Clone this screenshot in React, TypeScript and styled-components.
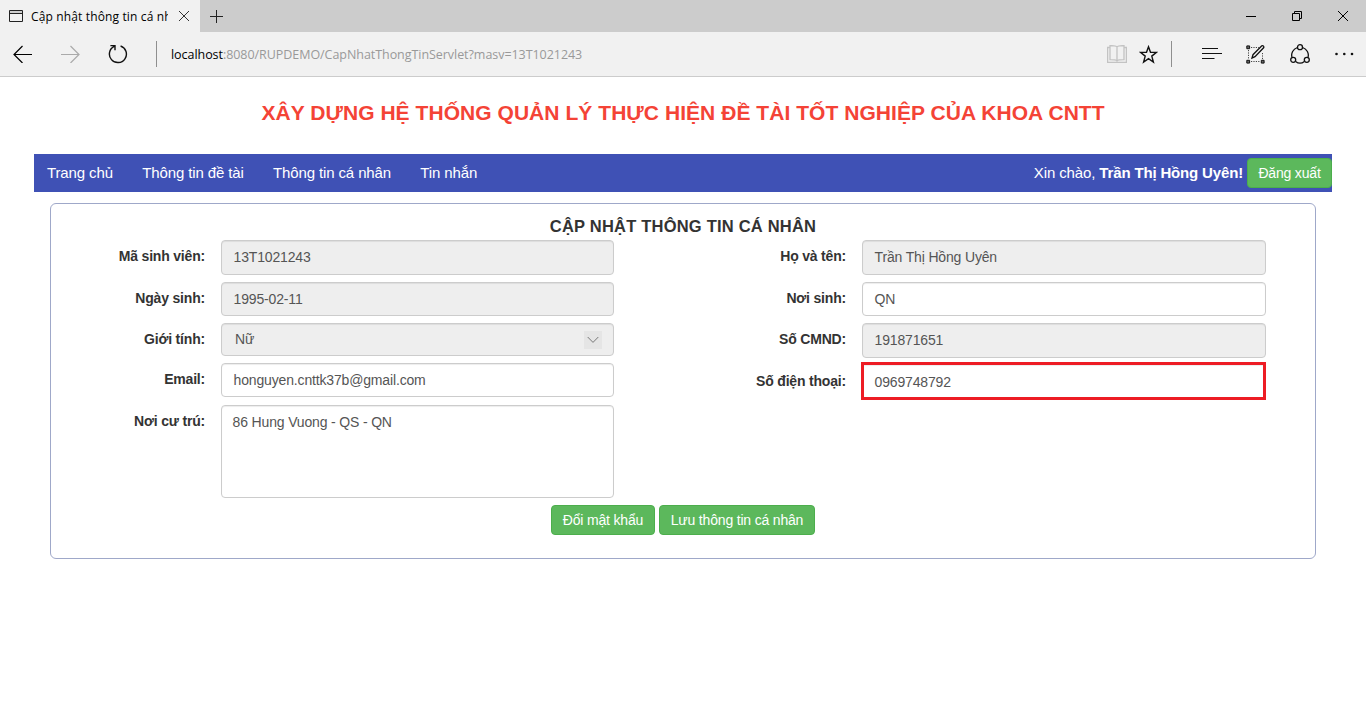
import React from "react";
import styled, { createGlobalStyle } from "styled-components";

const GlobalStyle = createGlobalStyle`
  * { box-sizing: border-box; }
  html, body { margin: 0; padding: 0; background: #fff; }
  body { overflow: hidden; font-family: "Liberation Sans", Arial, sans-serif; font-size: 14px; color: #333; }
  svg { display: block; }
`;

const Page = styled.div`
  width: 1366px;
  height: 728px;
  background: #fff;
`;

const TabStrip = styled.div`
  display: flex;
  height: 32px;
  background: #ccc;
`;

const Tab = styled.div`
  display: flex;
  align-items: center;
  width: 200px;
  height: 32px;
  padding-left: 9px;
  background: #f1f1f1;
`;

const TabTitle = styled.div`
  width: 137px;
  margin-left: 8px;
  padding-top: 1px;
  overflow: hidden;
  white-space: nowrap;
  font: 12px/20px "Open Sans", sans-serif;
  letter-spacing: 0.14px;
  color: #000;
`;

const TabClose = styled.div`
  margin-left: 11px;
`;

const NewTab = styled.div`
  padding: 9px 10px;
`;

const WindowControls = styled.div`
  display: flex;
  margin-left: auto;
`;

const WindowControl = styled.div`
  display: flex;
  align-items: center;
  justify-content: center;
  width: 46px;
  height: 32px;
`;

const Toolbar = styled.div`
  display: flex;
  align-items: center;
  height: 45px;
  padding-right: 12px;
  border-bottom: 1px solid #ccc;
  background: #f1f1f1;
`;

const ToolButton = styled.div<{ $left: number }>`
  margin-left: ${(p) => p.$left}px;
`;

const Separator = styled.div<{ $left: number }>`
  width: 1px;
  height: 26px;
  margin-left: ${(p) => p.$left}px;
  background: #8f8f8f;
`;

const Address = styled.div`
  flex: 1;
  margin-left: 14px;
  padding-top: 2px;
  white-space: nowrap;
  font: 12.5px/20px "Open Sans", sans-serif;
  letter-spacing: -0.05px;
  color: #999;
`;

const Host = styled.span`
  color: #000;
`;

const Heading = styled.h1`
  margin: 0;
  padding-top: 23px;
  height: 77px;
  text-align: center;
  white-space: nowrap;
  font-size: 21px;
  line-height: 26px;
  font-weight: 700;
  letter-spacing: 0.05px;
  color: #f44336;
`;

const NavBar = styled.nav`
  display: flex;
  align-items: center;
  height: 38px;
  margin: 0 34px;
  padding-left: 13px;
  background: #3f51b5;
  color: #fff;
  font-size: 15px;
  letter-spacing: -0.12px;
  white-space: nowrap;
`;

const NavLink = styled.a`
  margin-right: 29.3px;
  padding-bottom: 2px;
`;

const Greeting = styled.span`
  margin-left: auto;
  margin-right: 4px;
  padding-bottom: 2px;
`;

const UserName = styled.b`
  letter-spacing: -0.16px;
`;

const GreenButton = styled.button<{ $width: number }>`
  width: ${(p) => p.$width}px;
  height: 30px;
  padding: 0;
  border: 1px solid #4cae4c;
  border-radius: 4px;
  background: #5cb85c;
  color: #fff;
  font: 14px/20px "Liberation Sans", Arial, sans-serif;
  letter-spacing: -0.18px;
  white-space: nowrap;
`;

const Panel = styled.section`
  height: 356px;
  margin: 11px 50px 0;
  padding-top: 12px;
  border: 1px solid #9fa8c9;
  border-radius: 6px;
`;

const PanelTitle = styled.h2`
  margin: 0;
  height: 24px;
  text-align: center;
  font-size: 16.5px;
  line-height: 21px;
  font-weight: 700;
  letter-spacing: 0.21px;
`;

const Columns = styled.div`
  display: flex;
  height: 265px;
`;

const Column = styled.div<{ $width: number }>`
  width: ${(p) => p.$width}px;
`;

const Row = styled.div<{ $height: number; $gap: number }>`
  display: flex;
  height: ${(p) => p.$height}px;
  margin-bottom: ${(p) => p.$gap}px;
`;

const Label = styled.label<{ $width: number }>`
  width: ${(p) => p.$width}px;
  margin-right: 16px;
  text-align: right;
  font-weight: 700;
  line-height: 32px;
  letter-spacing: -0.19px;
  white-space: nowrap;
`;

const Field = styled.div<{ $width: number; $muted?: boolean; $marked?: boolean; $indent?: number }>`
  display: flex;
  justify-content: space-between;
  width: ${(p) => p.$width}px;
  height: 100%;
  padding: 0 11px 0 ${(p) => p.$indent ?? 11.6}px;
  border: 1px solid #ccc;
  border-radius: 4px;
  background: ${(p) => (p.$muted ? "#eee" : "#fff")};
  box-shadow: inset 0 1px 1px rgba(0, 0, 0, 0.075);
  color: #555;
  line-height: 33px;
  letter-spacing: -0.16px;
  ${(p) =>
    p.$marked &&
    `
    height: 38px;
    margin: -3px 0 0 -1px;
    padding-left: 10.6px;
    border: 3px solid #ed1c24;
    border-radius: 0;
    line-height: 34px;
  `}
`;

const SelectArrow = styled.span`
  display: flex;
  align-items: center;
  justify-content: center;
  width: 18px;
  height: 18px;
  margin-top: 7px;
  background: #e5e5e5;
`;

const SelectValue = styled.span`
  margin-top: -1px;
`;

const Actions = styled.div`
  display: flex;
  justify-content: center;
  gap: 4px;
`;

type FieldSpec = {
  label: string;
  value: string;
  height: number;
  gap: number;
  muted?: boolean;
  marked?: boolean;
  select?: boolean;
  indent?: number;
};

const leftFields: FieldSpec[] = [
  { label: "Mã sinh viên:", value: "13T1021243", height: 35, gap: 7, muted: true },
  { label: "Ngày sinh:", value: "1995-02-11", height: 34, gap: 7, muted: true },
  { label: "Giới tính:", value: "Nữ", height: 33, gap: 7, muted: true, select: true, indent: 13 },
  { label: "Email:", value: "honguyen.cnttk37b@gmail.com", height: 34, gap: 8 },
  { label: "Nơi cư trú:", value: "86 Hung Vuong - QS - QN", height: 93, gap: 0, indent: 10.6 },
];

const rightFields: FieldSpec[] = [
  { label: "Họ và tên:", value: "Trần Thị Hồng Uyên", height: 35, gap: 7, muted: true },
  { label: "Nơi sinh:", value: "QN", height: 34, gap: 7 },
  { label: "Số CMND:", value: "191871651", height: 35, gap: 7, muted: true },
  { label: "Số điện thoại:", value: "0969748792", height: 34, gap: 0, marked: true },
];

function FormColumn({ fields, width, labelWidth, fieldWidth }: { fields: FieldSpec[]; width: number; labelWidth: number; fieldWidth: number }) {
  return (
    <Column $width={width}>
      {fields.map((f) => (
        <Row key={f.label} $height={f.height} $gap={f.gap}>
          <Label $width={labelWidth}>{f.label}</Label>
          <Field $width={f.marked ? fieldWidth + 1 : fieldWidth} $muted={f.muted} $marked={f.marked} $indent={f.indent}>
            {f.select ? <SelectValue>{f.value}</SelectValue> : <span>{f.value}</span>}
            {f.select && (
              <SelectArrow>
                <svg width="12" height="8" viewBox="0 0 12 8" fill="none" stroke="#777">
                  <path d="M.7 1 6 6.4 11.3 1" />
                </svg>
              </SelectArrow>
            )}
          </Field>
        </Row>
      ))}
    </Column>
  );
}

function BrowserChrome() {
  return (
    <>
      <TabStrip>
        <Tab>
          <svg width="14" height="12" viewBox="0 0 14 12" fill="none" stroke="#222">
            <path d="M.5.5h13v11H.5zM.5 3.5h13" />
            <path d="M1 2h12" stroke="#aaa" />
          </svg>
          <TabTitle>Cập nhật thông tin cá nhân</TabTitle>
          <TabClose>
            <svg width="10" height="10" viewBox="0 0 10 10" stroke="#333">
              <path d="M0 0 10 10M10 0 0 10" />
            </svg>
          </TabClose>
        </Tab>
        <NewTab>
          <svg width="13" height="14" viewBox="0 0 13 14" stroke="#222">
            <path d="M0 7.5h13M6.5 1v13" />
          </svg>
        </NewTab>
        <WindowControls>
          <WindowControl>
            <svg width="10" height="10" viewBox="0 0 10 10" stroke="#000">
              <path d="M0 5.5h10" />
            </svg>
          </WindowControl>
          <WindowControl>
            <svg width="10" height="10" viewBox="0 0 10 10" fill="none" stroke="#000">
              <path d="M.5 2.5h7v7h-7zM2.5 2V.5h7v7H8" />
            </svg>
          </WindowControl>
          <WindowControl>
            <svg width="10" height="10" viewBox="0 0 10 10" stroke="#000">
              <path d="M0 0 10 10M10 0 0 10" />
            </svg>
          </WindowControl>
        </WindowControls>
      </TabStrip>
      <Toolbar>
        <ToolButton $left={13}>
          <svg width="19" height="18" viewBox="0 0 19 18" fill="none" stroke="#000" strokeWidth="1.2">
            <path d="M19 9.5H1M9.5 1 1 9.5 9.5 18" />
          </svg>
        </ToolButton>
        <ToolButton $left={29}>
          <svg width="19" height="18" viewBox="0 0 19 18" fill="none" stroke="#aaa" strokeWidth="1.2">
            <path d="M0 9.5h18M9.5 1 18 9.5 9.5 18" />
          </svg>
        </ToolButton>
        <ToolButton $left={28}>
          <svg width="20" height="20" viewBox="0 0 20 20" fill="none" stroke="#111" strokeWidth="1.4">
            <path d="M6.2 2.4A8.5 8.5 0 1 0 12.6 2M2.4 1.6h4.6v4.6" />
          </svg>
        </ToolButton>
        <Separator $left={28} />
        <Address>
          <Host>localhost</Host>:8080/RUPDEMO/CapNhatThongTinServlet?masv=13T1021243
        </Address>
        <ToolButton $left={0}>
          <svg width="20" height="18" viewBox="0 0 20 18" fill="none" stroke="#c3c3c3" strokeWidth="1.3">
            <path d="M3 2.5H.6v14.9h18.8V2.5H17M10 16.5V1.8C8.9.8 7 .6 3 .6v14.1c4 0 6 .1 7 1.2 1-1.1 3-1.2 7-1.2V.6c-4 0-5.9.2-7 1.2" />
          </svg>
        </ToolButton>
        <ToolButton $left={12}>
          <svg width="19" height="19" viewBox="0 0 19 19" fill="none" stroke="#111" strokeWidth="1.4">
            <path d="m9.5 1.8 2 5.5 6 .1-4.7 3.7 1.6 5.9-4.9-3.3L4.6 17l1.6-5.9L1.5 7.4l6-.1z" />
          </svg>
        </ToolButton>
        <Separator $left={13} />
        <ToolButton $left={30}>
          <svg width="20" height="12" viewBox="0 0 20 12" stroke="#111" strokeWidth="1.2">
            <path d="M0 .5h16M0 5.5h20M0 10.5h12.5" />
          </svg>
        </ToolButton>
        <ToolButton $left={24}>
          <svg width="19" height="19" viewBox="0 0 19 19" fill="none" stroke="#111">
            <path d="M5 2.5h8M2.5 5v9M5 16.5h9M16.5 8v6" stroke="#444" strokeDasharray="1.2 1.2" />
            <path d="M.8.9h2.8v2.8H.8zM.8 15.3h2.8v2.8H.8zM15.3 15.3h2.8v2.8h-2.8z" fill="#666" />
            <path d="m6 13 1-3.3L15.8.9c1.3-.7 2.6.7 1.8 1.9L9 11.6z" strokeWidth="1.3" />
          </svg>
        </ToolButton>
        <ToolButton $left={25}>
          <svg width="20" height="20" viewBox="0 0 20 20" fill="none" stroke="#111" strokeWidth="1.3">
            <circle cx="10" cy="3.2" r="2.5" />
            <circle cx="3.2" cy="15.8" r="2.5" />
            <circle cx="16.8" cy="15.8" r="2.5" />
            <path d="M7.4 3.5C3 5 .8 9.3 2 13.4M12.6 3.5c4.4 1.5 6.6 5.8 5.4 9.9M5.6 17.4c2.7 2.1 6.1 2.1 8.8 0" />
          </svg>
        </ToolButton>
        <ToolButton $left={25}>
          <svg width="19" height="4" viewBox="0 0 19 4" fill="#111">
            <circle cx="1.5" cy="2" r="1.3" />
            <circle cx="9.3" cy="2" r="1.3" />
            <circle cx="17" cy="2" r="1.3" />
          </svg>
        </ToolButton>
      </Toolbar>
    </>
  );
}

export default function App() {
  return (
    <Page>
      <GlobalStyle />
      <BrowserChrome />
      <Heading>XÂY DỰNG HỆ THỐNG QUẢN LÝ THỰC HIỆN ĐỀ TÀI TỐT NGHIỆP CỦA KHOA CNTT</Heading>
      <NavBar>
        <NavLink>Trang chủ</NavLink>
        <NavLink>Thông tin đề tài</NavLink>
        <NavLink>Thông tin cá nhân</NavLink>
        <NavLink>Tin nhắn</NavLink>
        <Greeting>
          Xin chào, <UserName>Trần Thị Hồng Uyên!</UserName>
        </Greeting>
        <GreenButton $width={85}>Đăng xuất</GreenButton>
      </NavBar>
      <Panel>
        <PanelTitle>CẬP NHẬT THÔNG TIN CÁ NHÂN</PanelTitle>
        <Columns>
          <FormColumn fields={leftFields} width={632} labelWidth={154} fieldWidth={393} />
          <FormColumn fields={rightFields} width={632} labelWidth={163} fieldWidth={404} />
        </Columns>
        <Actions>
          <GreenButton $width={104}>Đổi mật khẩu</GreenButton>
          <GreenButton $width={156}>Lưu thông tin cá nhân</GreenButton>
        </Actions>
      </Panel>
    </Page>
  );
}
